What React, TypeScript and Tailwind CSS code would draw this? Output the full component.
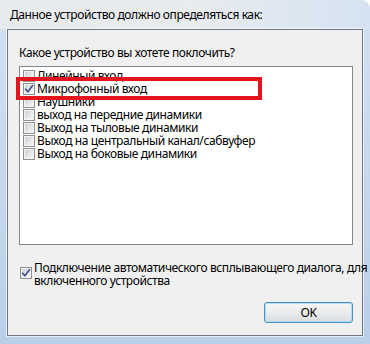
import React from "react";

function Box({ checked }: { checked?: boolean }) {
  return (
    <div className="w-[12px] h-[12px] shrink-0 border border-[#8e8f8f] bg-[#f4f4f4] p-[1px]">
      <div className="relative w-full h-full bg-gradient-to-br from-[#cdd1d6] to-[#f7f7f7]">
        {checked && (
          <svg
            className="absolute left-[-1px] top-[-1px]"
            width="10"
            height="10"
            viewBox="0 0 10 10"
          >
            <path
              d="M1.6 5.2 L3.9 7.8 L8.6 1.6"
              fill="none"
              stroke="#3d4f8c"
              strokeWidth="1.6"
              strokeLinecap="round"
              strokeLinejoin="round"
            />
          </svg>
        )}
      </div>
    </div>
  );
}

const items: { label: string; checked?: boolean }[] = [
  { label: "Линейный вход" },
  { label: "Микрофонный вход", checked: true },
  { label: "Наушники" },
  { label: "выход на передние динамики" },
  { label: "Выход на тыловые динамики" },
  { label: "Выход на центральный канал/сабвуфер" },
  { label: "Выход на боковые динамики" },
];

export default function App() {
  return (
    <div
      className="relative w-[370px] h-[344px] overflow-hidden rounded-tr-[9px] bg-gradient-to-b from-[#d3e1f1] to-[#b9cfe8] flex flex-col pl-[7px] pr-[7px] pb-[8px] text-[12px] tracking-[-0.4px] text-black"
      style={{ fontFamily: '"Noto Sans", "Open Sans", sans-serif' }}
    >
      <div className="h-[29px] -ml-[7px] -mr-[7px] pl-[10px] flex items-center bg-gradient-to-r from-[#e8ebee] via-[#e9ecef] to-[#d5e3f2] leading-[15px]">
        Данное устройство должно определяться как:
      </div>
      <div className="flex-1 border border-[#6f7884] bg-[#f0f0f0] flex flex-col pl-[11px] pr-[9px] shadow-[0_0_0_1px_rgba(255,255,255,0.6)]">
        <div className="mt-[15px] leading-[15px]">
          Какое устройство вы хотете поклочить?
        </div>
        <div className="mt-[6px] h-[179px] border border-[#828790] bg-white pt-[2px] pl-[3px] flex flex-col">
          {items.map((it) => (
            <div key={it.label} className="h-[13px] flex items-center gap-[2px] leading-[13px] whitespace-nowrap">
              <Box checked={it.checked} />
              <span>{it.label}</span>
            </div>
          ))}
        </div>
        <div className="mt-[16px] flex items-start gap-[2px] pl-[1px] leading-[13px]">
          <div className="mt-[6px]">
            <Box checked />
          </div>
          <div className="flex flex-col">
            <span className="whitespace-nowrap">Подключение автоматического всплывающего диалога, для</span>
            <span className="whitespace-nowrap">включенного устройства</span>
          </div>
        </div>
        <button className="mt-[15px] self-end w-[89px] h-[21px] rounded-[3px] border border-[#4f8fc0] bg-gradient-to-b from-[#f6f6f6] via-[#ececec] to-[#d8dde2] shadow-[inset_0_0_0_1px_rgba(170,220,250,0.9)] flex items-center justify-center leading-[13px] text-[12px]">
          OK
        </button>
      </div>
      <div className="absolute left-[16px] top-[77px] w-[246px] h-[23px] border-[4px] border-[#e3141b] pointer-events-none" />
    </div>
  );
}
